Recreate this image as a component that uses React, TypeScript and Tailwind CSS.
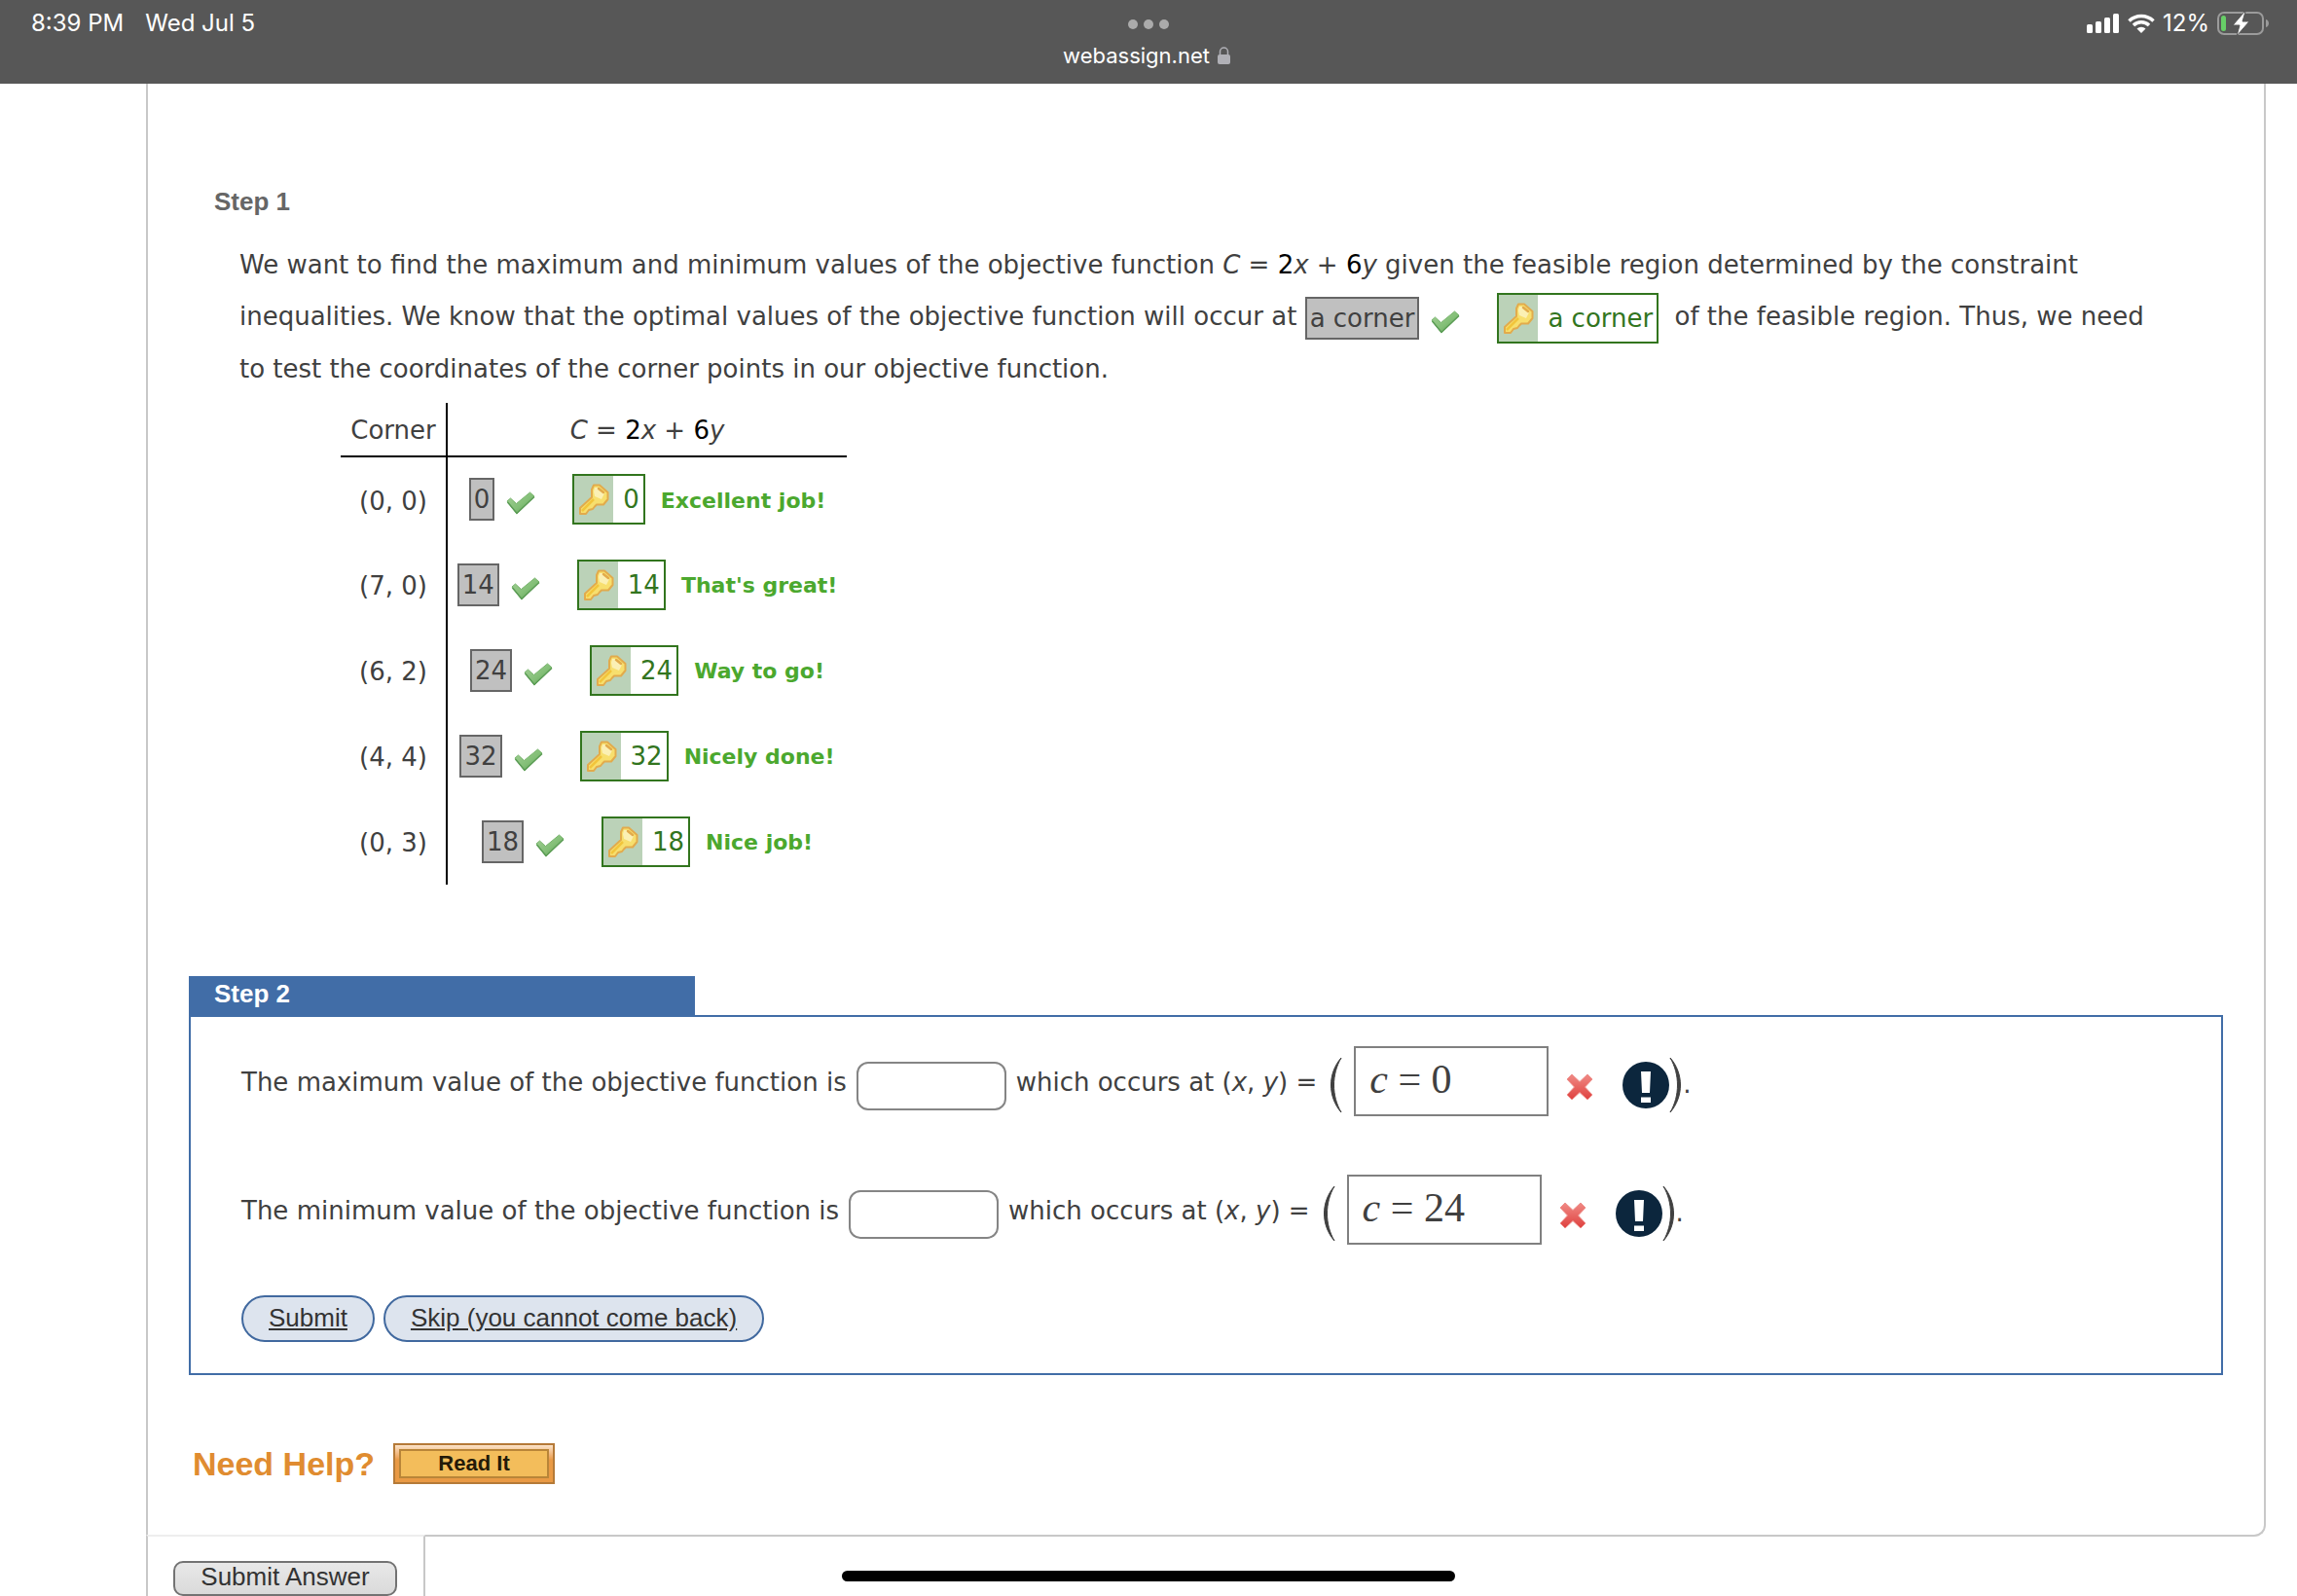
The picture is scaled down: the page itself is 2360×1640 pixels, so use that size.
import { type ReactNode } from "react";

type CornerRow = {
  corner: string;
  value: string;
  praise: string;
};

const cornerRows: CornerRow[] = [
  { corner: "(0, 0)", value: "0", praise: "Excellent job!" },
  { corner: "(7, 0)", value: "14", praise: "That's great!" },
  { corner: "(6, 2)", value: "24", praise: "Way to go!" },
  { corner: "(4, 4)", value: "32", praise: "Nicely done!" },
  { corner: "(0, 3)", value: "18", praise: "Nice job!" }
];

const questions = [
  { id: "maximum", answer: "0" },
  { id: "minimum", answer: "24" }
];

function CheckIcon() {
  return (
    <svg className="h-6 w-[30px] shrink-0" viewBox="0 0 30 24" role="img" aria-label="Correct">
      <defs>
        <linearGradient id="check-fill" x1="0" y1="0" x2="1" y2="1">
          <stop offset="0" stopColor="#a3d095" />
          <stop offset="0.55" stopColor="#83bf77" />
          <stop offset="1" stopColor="#4f9148" />
        </linearGradient>
      </defs>
      <path
        d="M1 10 4.500 7 10.500 12.500 24.500 1 29 5 11 23Z"
        fill="url(#check-fill)"
        stroke="#79b56e"
        strokeLinejoin="round"
      />
      <path d="M1.500 11 11 22.500 29 5.500" fill="none" stroke="#5b9c55" strokeWidth="1.500" />
    </svg>
  );
}

function KeyIcon() {
  return (
    <svg className="size-8" viewBox="0 0 32 32" role="img" aria-label="Answer key">
      <path
        d="M16 1.500h6L30.500 9v7L26 21.500h-7L17 23.500 15 26l-4 1-3 4H2v-6L14 14V6Z"
        fill="#f7df6e"
        stroke="#e2ab4c"
        strokeWidth="2"
        strokeLinejoin="round"
      />
      <path d="M17 4h4l6 6-3 6-7-3-1-5Z" fill="#fbf0b4" />
      <path d="M21 5l5 4" stroke="#e2ab4c" strokeWidth="2.500" strokeLinecap="round" />
      <path d="M4 28 16 16" stroke="#f2c53c" strokeWidth="2.500" />
    </svg>
  );
}

function WrongIcon() {
  return (
    <svg className="mt-3 size-7 shrink-0" viewBox="0 0 28 28" role="img" aria-label="Incorrect">
      <defs>
        <linearGradient id="wrong-fill" x1="0" y1="0" x2="0" y2="1">
          <stop offset="0" stopColor="#f08a85" />
          <stop offset="1" stopColor="#df403e" />
        </linearGradient>
      </defs>
      <path
        d="M6 1 14 8.500 22 1 27 6 19.500 14 27 22 22 27 14 19.500 6 27 1 22 8.500 14 1 6Z"
        fill="url(#wrong-fill)"
        stroke="#ee8f8b"
        strokeLinejoin="round"
      />
    </svg>
  );
}

function AlertIcon() {
  return (
    <svg className="size-12 shrink-0" viewBox="0 0 48 48" role="img" aria-label="Feedback">
      <circle cx="24" cy="24" r="24" fill="#0c263d" />
      <path d="M19 10h10l-1 22h-8ZM19 36.500h10V42H19Z" fill="#fff" />
    </svg>
  );
}

function Paren({ side }: { side: "left" | "right" }) {
  return (
    <svg className="h-[58px] w-[14px] shrink-0" viewBox="0 0 14 58" aria-hidden="true">
      <path
        d={side === "left" ? "M13 1C-1 17-1 41 13 57 3 40 3 18 13 1Z" : "M1 1C15 17 15 41 1 57 11 40 11 18 1 1Z"}
        fill="#404040"
        stroke="#404040"
      />
    </svg>
  );
}

function GivenAnswer({ children }: { children: ReactNode }) {
  return (
    <span className="inline-flex h-11 items-center border-2 border-[#666] bg-[#c0c0c0] px-[3px] leading-none">
      {children}
    </span>
  );
}

function KeyAnswer({ children }: { children: ReactNode }) {
  return (
    <span className="inline-flex h-[52px] items-center border-2 border-[#32751e] leading-none text-[#32751e]">
      <span className="flex h-full w-10 items-center justify-center bg-[#bbd2b8]">
        <KeyIcon />
      </span>
      <span className="pr-1 pl-[10px]">{children}</span>
    </span>
  );
}

function GradedAnswer({ value }: { value: string }) {
  return (
    <>
      <GivenAnswer>{value}</GivenAnswer>
      <span className="mt-2 mr-[38px] ml-3 flex">
        <CheckIcon />
      </span>
      <KeyAnswer>{value}</KeyAnswer>
    </>
  );
}

function Objective() {
  return (
    <span className="whitespace-nowrap">
      <i>C</i> = <span className="text-black">2</span>
      <i>x</i> + <span className="text-black">6</span>
      <i>y</i>
    </span>
  );
}

function StatusBar() {
  return (
    <header className="grid h-[86px] grid-cols-[1fr_auto_1fr] bg-[#575757] pr-7 pl-8 font-['Inter',sans-serif] text-2xl text-white">
      <div className="flex items-center gap-[22px] self-start pt-2">
        <span>8:39 PM</span>
        <span>Wed Jul 5</span>
      </div>
      <div className="flex flex-col items-center pr-1">
        <div className="flex h-[42px] items-center gap-[6px] pt-2">
          <span className="size-[10px] rounded-full bg-[#ababab]" />
          <span className="size-[10px] rounded-full bg-[#ababab]" />
          <span className="size-[10px] rounded-full bg-[#ababab]" />
        </div>
        <div className="flex items-center gap-2 pr-1 text-[22px] leading-[30px]">
          <span>webassign.net</span>
          <svg className="h-[18px] w-[13px]" viewBox="0 0 13 18" aria-hidden="true">
            <rect y="8" width="13" height="10" rx="2" fill="#b0b0b6" />
            <path d="M2.500 9V5a4 4 0 0 1 8 0v4" fill="none" stroke="#b0b0b6" strokeWidth="1.500" />
          </svg>
        </div>
      </div>
      <div className="flex items-center gap-2 self-start justify-self-end pt-2">
        <svg className="h-5 w-[34px]" viewBox="0 0 34 20" fill="#fff" aria-hidden="true">
          <rect y="11" width="6" height="9" rx="1.500" />
          <rect x="9" y="8" width="6" height="12" rx="1.500" />
          <rect x="18" y="4" width="6" height="16" rx="1.500" />
          <rect x="27" width="6" height="20" rx="1.500" />
        </svg>
        <svg className="h-5 w-7" viewBox="0 0 28 20" fill="none" stroke="#fff" strokeWidth="3.500" aria-hidden="true">
          <path d="M1.500 7.500a18 18 0 0 1 25 0M6 12a11.500 11.500 0 0 1 16 0" />
          <path d="M14 20 9.500 15.500a6.500 6.500 0 0 1 9 0Z" fill="#fff" stroke="none" />
        </svg>
        <span>12%</span>
        <svg className="h-[26px] w-[54px]" viewBox="0 0 54 26" aria-hidden="true">
          <rect x="1" y="2" width="46" height="22" rx="6" fill="none" stroke="#9b9b9b" strokeWidth="2" />
          <path d="M50 9c4 1 4 7 0 8Z" fill="#9b9b9b" />
          <rect x="4" y="5" width="5" height="16" rx="2.500" fill="#67ce67" />
          <path d="M28 1 16 15h7l-3 11 13-15h-7l3-10Z" fill="#fff" stroke="#575757" strokeWidth="1" />
        </svg>
      </div>
    </header>
  );
}

function CornerTable() {
  return (
    <table className="mt-2 ml-[104px] border-collapse text-center">
      <thead>
        <tr className="h-[55px] border-b-2 border-black">
          <th className="w-[109px] border-r-2 border-black pt-1 font-normal">Corner</th>
          <th className="w-[411px] pt-1 font-normal">
            <Objective />
          </th>
        </tr>
      </thead>
      <tbody>
        {cornerRows.map((row) => (
          <tr key={row.corner} className="h-[88px]">
            <td className="border-r-2 border-black pt-1">{row.corner}</td>
            <td>
              <div className="flex items-center justify-center">
                <GradedAnswer value={row.value} />
                <span className="ml-4 pt-[2px] text-[22px] font-bold text-[#4ba82e]">{row.praise}</span>
              </div>
            </td>
          </tr>
        ))}
      </tbody>
    </table>
  );
}

function StepTwo() {
  return (
    <section className="mx-[42px] mt-[94px]">
      <h2 className="h-10 w-[520px] bg-[#416da7] pl-[26px] font-['Liberation_Sans',Arial,sans-serif] leading-9 font-bold text-white">
        Step 2
      </h2>
      <form className="border-2 border-[#416da7] px-[52px] pt-[30px] pb-8" onSubmit={(e) => e.preventDefault()}>
        <div className="flex flex-col gap-[60px]">
          {questions.map((question) => (
            <div key={question.id} className="flex h-[72px] items-center">
              <label htmlFor={question.id} className="pt-1">
                The {question.id} value of the objective function is
              </label>
              <input
                id={question.id}
                type="text"
                className="mx-[10px] mt-[10px] h-[50px] w-[154px] rounded-xl border-2 border-[#858585] px-2"
              />
              <span className="mr-3 pt-1">
                which occurs at (<i>x</i>, <i>y</i>) =
              </span>
              <span className="flex pt-2">
                <Paren side="left" />
              </span>
              <div
                role="textbox"
                aria-label={`Point of the ${question.id}`}
                contentEditable
                suppressContentEditableWarning
                className="mr-[18px] ml-3 h-[72px] w-[200px] border-2 border-[#808080] pl-[14px] font-['Liberation_Serif',serif] text-[42px] leading-[64px]"
              >
                <i>c</i> = {question.answer}
              </div>
              <WrongIcon />
              <span className="ml-[30px] flex items-center pt-2">
                <AlertIcon />
                <Paren side="right" />
                <span>.</span>
              </span>
            </div>
          ))}
        </div>
        <div className="mt-[52px] flex gap-[9px] font-['Liberation_Sans',Arial,sans-serif] text-[#333]">
          <button type="submit" className="h-12 rounded-3xl border-2 border-[#41699f] bg-[#dde4ee] px-[26px] underline">
            Submit
          </button>
          <button type="button" className="h-12 rounded-3xl border-2 border-[#41699f] bg-[#dde4ee] px-[26px] underline">
            Skip (you cannot come back)
          </button>
        </div>
      </form>
    </section>
  );
}

export default function App() {
  return (
    <div className="relative h-screen overflow-hidden bg-white font-['DejaVu_Sans',Verdana,sans-serif] text-[26px] text-[#404040]">
      <StatusBar />
      <main className="mr-8 ml-[150px] rounded-br-xl border-x-2 border-b-2 border-[#c8c8c8] pb-[52px]">
        <section className="pr-[100px] pl-[94px]">
          <h2 className="-ml-[26px] pt-[101px] font-['Liberation_Sans',Arial,sans-serif] leading-10 font-bold text-[#666]">
            Step 1
          </h2>
          <p className="pt-[19px] leading-[53px]">
            We want to find the maximum and minimum values of the objective function <Objective /> given the feasible
            region determined by the constraint inequalities. We know that the optimal values of the objective function
            will occur at{" "}
            <span className="mr-2 inline-flex items-center align-middle">
              <GradedAnswer value="a corner" />
            </span>{" "}
            of the feasible region. Thus, we need to test the coordinates of the corner points in our objective
            function.
          </p>
          <CornerTable />
        </section>
        <StepTwo />
        <div className="mt-[70px] ml-[46px] flex items-center gap-[19px] font-['Liberation_Sans',Arial,sans-serif] font-bold">
          <span className="text-[34px] leading-10 text-[#e08c30]">Need Help?</span>
          <button
            type="button"
            className="h-[42px] w-[166px] border-2 border-[#b57a38] bg-linear-to-b from-[#fbe3c8] to-[#e99a45] to-40% p-1"
          >
            <span className="flex h-full items-center justify-center border-2 border-[#b98538] bg-[#f3bd5b] text-[22px] text-[#241a08]">
              Read It
            </span>
          </button>
        </div>
      </main>
      <footer className="relative -mt-[2px] ml-[150px] h-16 w-[287px] border-x-2 border-t-2 border-[#c8c8c8] border-t-[#eee] pt-[22px] pl-[26px]">
        <button
          type="button"
          className="h-9 w-[230px] rounded-[10px] border-2 border-[#737373] bg-linear-to-b from-[#e8e8e8] to-[#dadada] pb-1 font-['Liberation_Sans',Arial,sans-serif] leading-none text-[#333]"
        >
          Submit Answer
        </button>
      </footer>
      <div className="absolute bottom-[15px] left-1/2 h-[11px] w-[630px] -translate-x-1/2 rounded-full bg-black" />
    </div>
  );
}
